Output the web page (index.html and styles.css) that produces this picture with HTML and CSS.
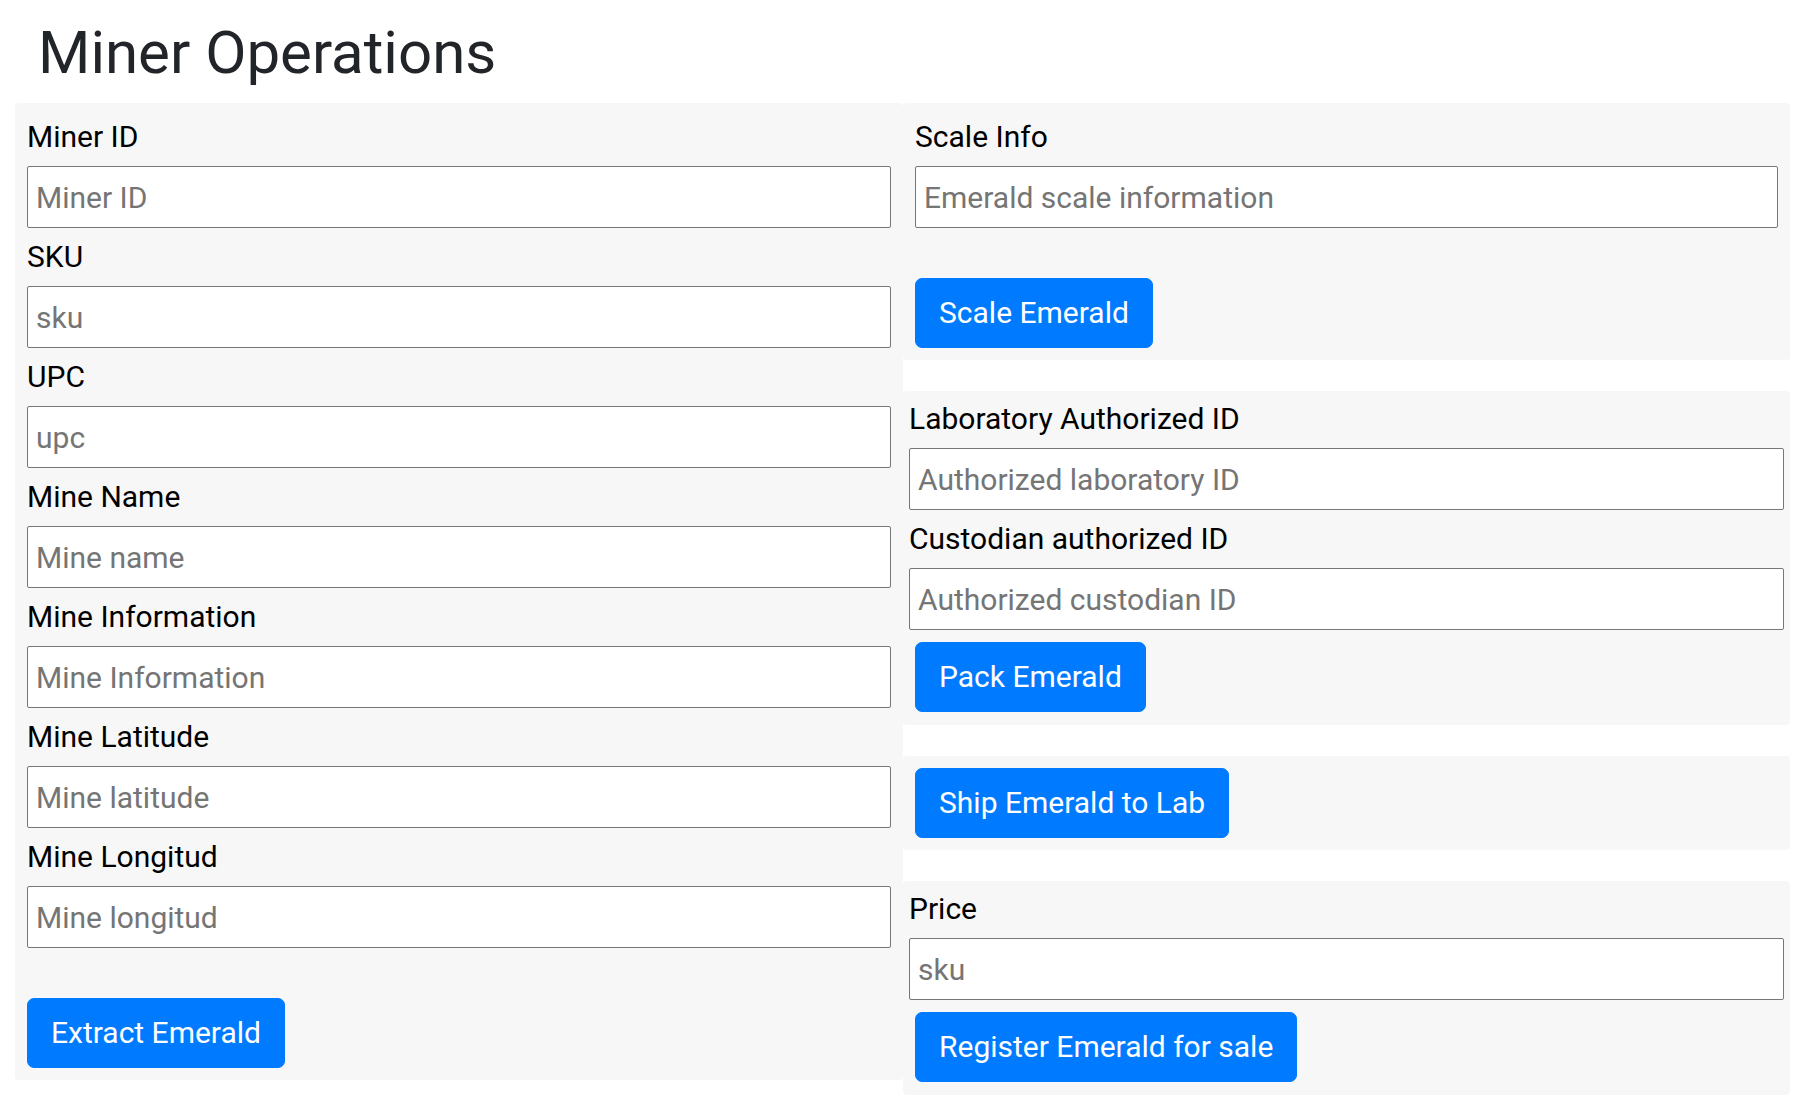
FILE: index.html
```html
<!DOCTYPE html>
<html lang="en">
<head>
<meta charset="utf-8">
<title>Miner Operations</title>
<link rel="stylesheet" href="styles.css">
</head>
<body>
<div class="page">
  <h2 class="title">Miner Operations</h2>
  <div class="columns">
    <section class="panel">
      <label class="field-label" for="minerId">Miner ID</label>
      <input class="field" id="minerId" type="text" placeholder="Miner ID">
      <label class="field-label" for="sku">SKU</label>
      <input class="field" id="sku" type="text" placeholder="sku">
      <label class="field-label" for="upc">UPC</label>
      <input class="field" id="upc" type="text" placeholder="upc">
      <label class="field-label" for="mineName">Mine Name</label>
      <input class="field" id="mineName" type="text" placeholder="Mine name">
      <label class="field-label" for="mineInfo">Mine Information</label>
      <input class="field" id="mineInfo" type="text" placeholder="Mine Information">
      <label class="field-label" for="mineLat">Mine Latitude</label>
      <input class="field" id="mineLat" type="text" placeholder="Mine latitude">
      <label class="field-label" for="mineLong">Mine Longitud</label>
      <input class="field" id="mineLong" type="text" placeholder="Mine longitud">
      <div class="actions spaced"><button class="btn" type="button">Extract Emerald</button></div>
    </section>
    <div class="stack">
      <section class="panel">
        <label class="field-label" for="scaleInfo">Scale Info</label>
        <input class="field" id="scaleInfo" type="text" placeholder="Emerald scale information">
        <div class="actions spaced"><button class="btn" type="button">Scale Emerald</button></div>
      </section>
      <section class="panel tight">
        <div class="fields">
          <label class="field-label" for="labId">Laboratory Authorized ID</label>
          <input class="field" id="labId" type="text" placeholder="Authorized laboratory ID">
          <label class="field-label" for="custId">Custodian authorized ID</label>
          <input class="field" id="custId" type="text" placeholder="Authorized custodian ID">
        </div>
        <div class="actions"><button class="btn" type="button">Pack Emerald</button></div>
      </section>
      <section class="panel">
        <div class="actions none"><button class="btn" type="button">Ship Emerald to Lab</button></div>
      </section>
      <section class="panel tight">
        <div class="fields">
          <label class="field-label" for="price">Price</label>
          <input class="field" id="price" type="text" placeholder="sku">
        </div>
        <div class="actions"><button class="btn" type="button">Register Emerald for sale</button></div>
      </section>
    </div>
  </div>
</div>
</body>
</html>
```
FILE: styles.css
```css
html, body {
  margin: 0;
  padding: 0;
  background: #ffffff;
}

body {
  font-family: Roboto, "Liberation Sans", Arial, sans-serif;
  font-size: 30px;
  color: #000000;
}

.page {
  padding: 17px 16px 0 15px;
}

.title {
  margin: 0 0 15px 23px;
  font-size: 60px;
  line-height: 71px;
  font-weight: 400;
  color: #212529;
}

.columns {
  display: grid;
  grid-template-columns: 888px 1fr;
  align-items: start;
}

.stack {
  display: flex;
  flex-direction: column;
  gap: 31px;
}

.panel {
  background: #f7f7f7;
  border-radius: 4px;
  padding: 12px;
}

.panel.tight {
  padding: 6px 6px 13px 6px;
}

.panel.tight .actions {
  padding-left: 6px;
}

.field-label {
  display: block;
  line-height: 44px;
  margin-bottom: 7px;
  color: #000000;
}

.field {
  display: block;
  box-sizing: border-box;
  width: 100%;
  height: 62px;
  margin: 0 0 7px 0;
  padding: 0 8px;
  font-family: inherit;
  font-size: 30px;
  color: #212529;
  background: #ffffff;
  border: 1px solid #767676;
  border-radius: 2px;
}

.field::placeholder {
  color: #757575;
}

.actions {
  margin-top: 12px;
}

.actions.spaced {
  margin-top: 50px;
}

.actions.none {
  margin-top: 0;
}

.btn {
  display: inline-block;
  box-sizing: border-box;
  height: 70px;
  padding: 0 23px;
  font-family: inherit;
  font-size: 30px;
  line-height: 44px;
  color: #ffffff;
  background: #007bff;
  border: 1px solid #007bff;
  border-radius: 7px;
  cursor: pointer;
}
```
